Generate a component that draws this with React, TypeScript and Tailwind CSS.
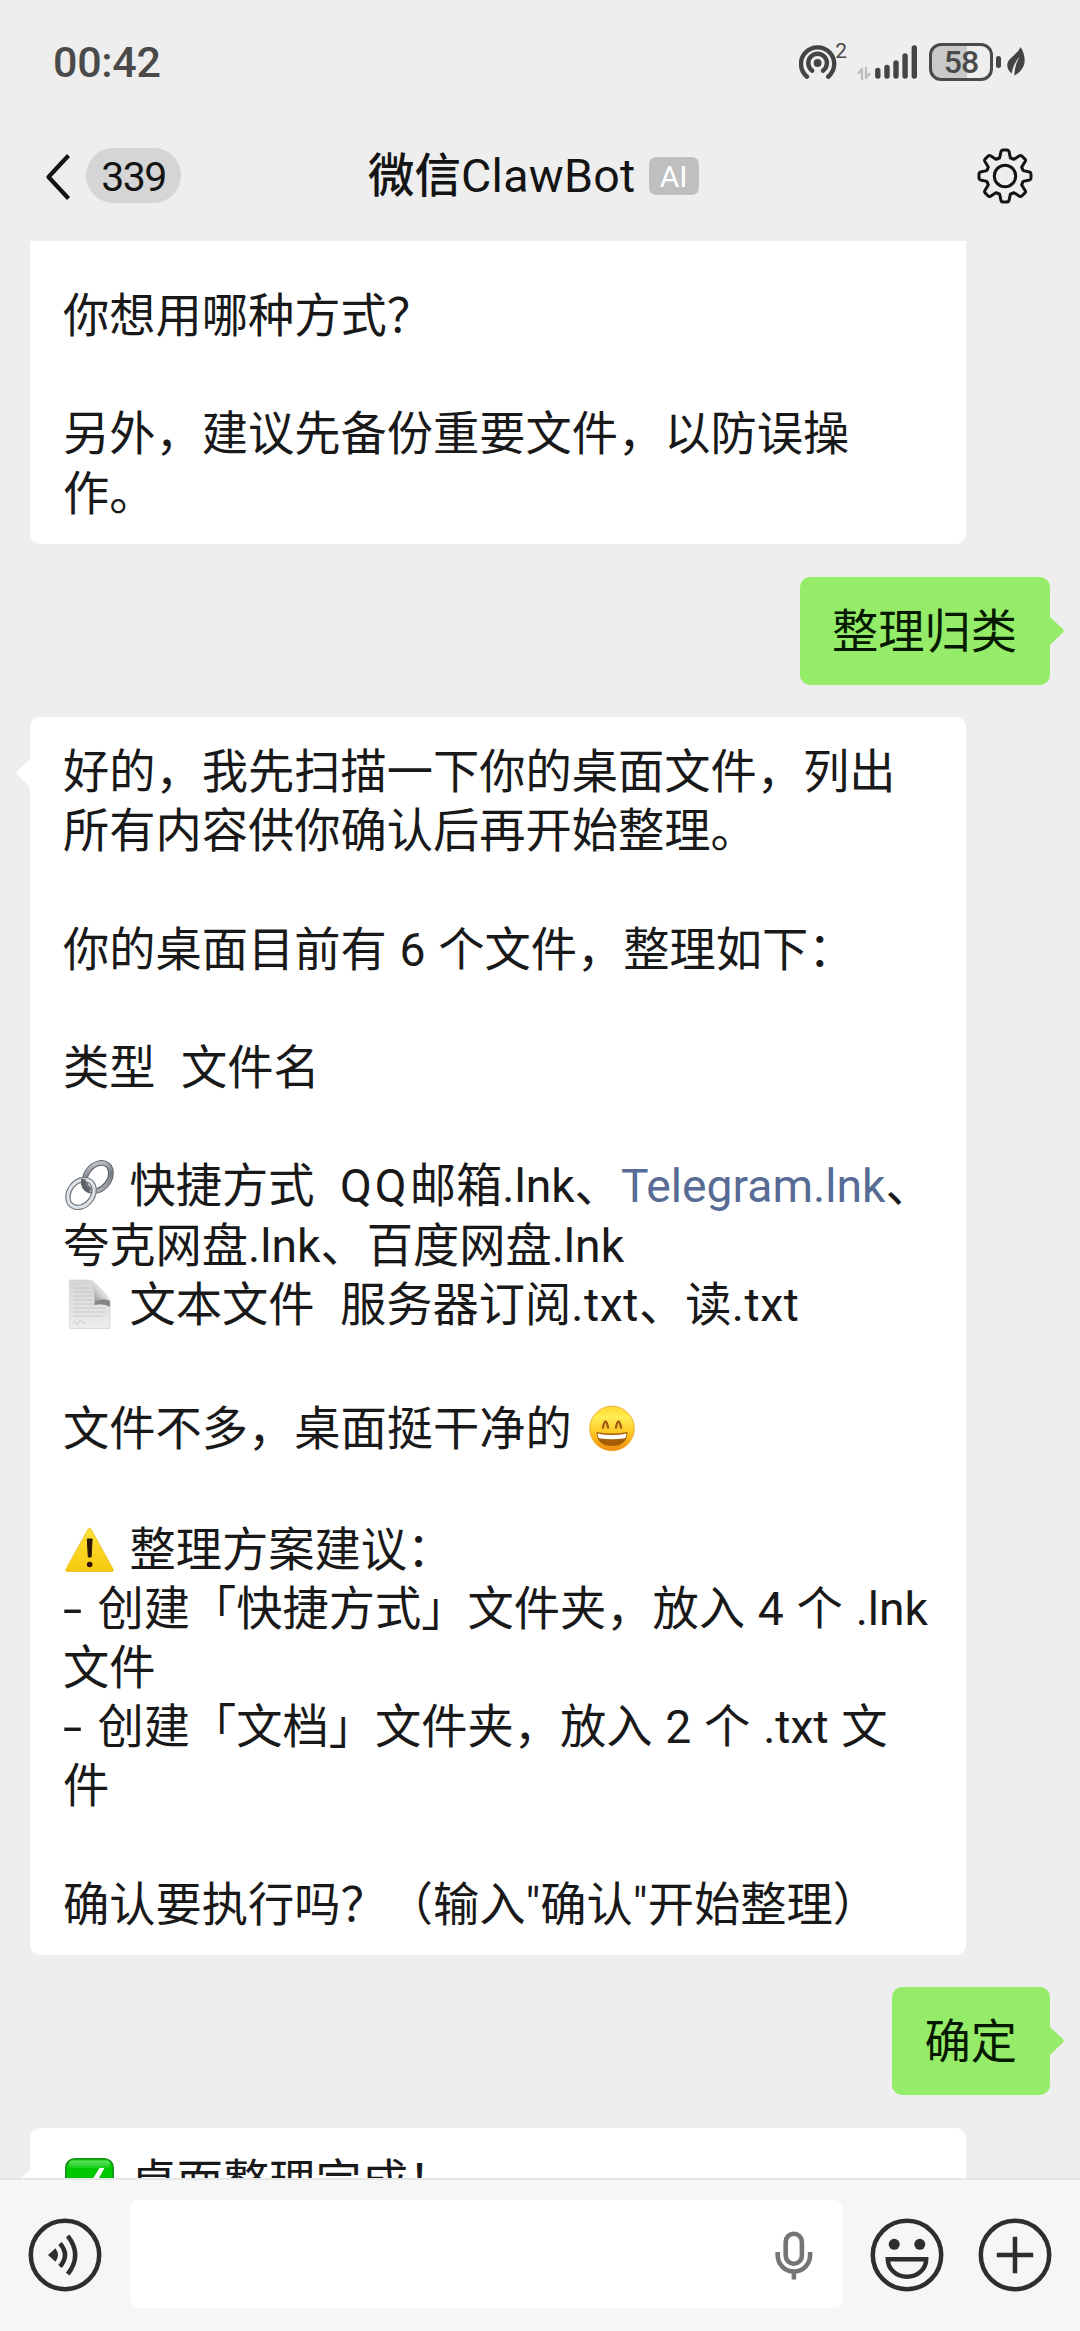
import React from 'react'

const TEETH = [0, 45, 90, 135, 180, 225, 270, 315];

const StatusBar = () => (
  <div className="flex h-[112px] shrink-0 items-start justify-between pl-[53px] pr-[55px] pt-[37px] text-[#4a4a4a]">
    <span className="h-[50px] text-[43px] font-medium leading-[50px] tracking-[-0.300px]">00:42</span>
    <div className="flex items-start">
      <svg className="mt-[6px] h-[38px] w-[38px]" viewBox="0 0 38 38" fill="none" stroke="#444" strokeWidth="4.4" strokeLinecap="round">
        <circle cx="18.6" cy="20" r="3.9" fill="#444" stroke="none" />
        <path d="M13.2 27.6a9.3 9.3 0 1 1 10.8 0" />
        <path d="M8 33.7a16.6 16.6 0 1 1 21.2 0" />
      </svg>
      <span className="-ml-[2px] mt-[2px] text-[21px] leading-[24px]">2</span>
      <svg className="ml-[9px] mt-[6px] h-[38px] w-[64px]" viewBox="0 0 64 38" stroke="#444" strokeWidth="5.4" strokeLinecap="round">
        <path d="M6 36V26L2.5 30M10 25v10l3.5-4" fill="none" stroke="#bdbdbd" strokeWidth="2.4" strokeLinejoin="round" />
        <path d="M21.8 27.5V33M31 24.5V33M40 20V33M49.1 13V33M58.3 5V33" />
      </svg>
      <div className="ml-[9px] mt-[6px] flex h-[38px] w-[64px] items-center justify-center rounded-[12px] border-[3px] border-[#4a4a4a] bg-linear-to-r from-[#c9c9c9] from-60% to-[#eee] to-60% text-[32px] font-medium leading-none tracking-[-1px]">58</div>
      <div className="ml-[3px] mt-[19px] h-[12px] w-[5px] rounded-full bg-[#444]" />
      <svg className="ml-[6px] mt-[10px] h-[29px] w-[18px]" viewBox="0 0 18 29">
        <path d="M13.5 0C17 5 18 11 17.6 15c-.6 6-5 11-10.300 13.500C7.500 22 9 16 12.500 10 8.500 14 5.500 20 4.800 26.500 1.500 24.500 0 21 .3 17.500 1 11 10 8 13.500 0Z" fill="#444" />
      </svg>
    </div>
  </div>
);

const Header = () => (
  <div className="flex h-[129px] shrink-0 items-start justify-between pl-[45px] pr-[47px] pt-[36px] text-[#141414]">
    <div className="flex w-[323px] items-center">
      <svg className="h-[54px] w-[26px]" viewBox="0 0 26 54" fill="none" stroke="#141414" strokeWidth="4.2" strokeLinejoin="round">
        <path d="M23.500 6.500 3.500 28 23.500 49.500" />
      </svg>
      <span className="ml-[15px] flex h-[55px] w-[95px] items-center justify-center rounded-full bg-[#d5d5d5] pt-[3px] text-[41px] leading-none tracking-[-1.500px]">339</span>
    </div>
    <div className="flex h-[55px] flex-1 items-center">
      <span className="pt-[2px] text-[46.500px] font-medium leading-[55px]">微信<span className="font-normal tracking-[.3px]">ClawBot</span></span>
      <span className="ml-[13px] flex h-[38px] w-[50px] items-center justify-center rounded-[7px] bg-[#bfbfbf] pt-[2px] text-[30px] leading-none text-white">AI</span>
    </div>
    <svg className="h-[56px] w-[56px]" viewBox="-28 -28 56 56" fill="none" stroke="#141414" strokeWidth="3" strokeLinecap="round" strokeLinejoin="round">
      <circle r="10.700" />
      {TEETH.map(a => (
        <path key={a} transform={`rotate(${a})`} d="M-7.200-17.300-5.400-18.200-4-24.500Q-3.600-26-2.200-26H2.200Q3.600-26 4-24.500L5.400-18.200 7.200-17.300" />
      ))}
    </svg>
  </div>
);

const LinkEmoji = () => (
  <svg className="-mt-[4px] ml-[1.500px] mr-[16px] h-[50px] w-[49px] shrink-0" viewBox="0 0 49 50" fill="none">
    <defs>
      <linearGradient id="steel" x1="0" y1="0" x2="1" y2="1">
        <stop offset="0" stopColor="#d4d8dc" />
        <stop offset=".5" stopColor="#767c83" />
        <stop offset="1" stopColor="#b5babf" />
      </linearGradient>
    </defs>
    <ellipse cx="32.800" cy="17" rx="11.500" ry="15.500" transform="rotate(38 32.800 17)" stroke="#5d6268" strokeWidth="5.600" />
    <ellipse cx="32.800" cy="17" rx="11.500" ry="15.500" transform="rotate(38 32.800 17)" stroke="url(#steel)" strokeWidth="3.600" />
    <ellipse cx="16" cy="33.500" rx="11.700" ry="15.200" transform="rotate(38 16 33.500)" stroke="#737a81" strokeWidth="5.400" />
    <ellipse cx="16" cy="33.500" rx="11.700" ry="15.200" transform="rotate(38 16 33.500)" stroke="#dfe4e8" strokeWidth="3" />
    <path d="M18.500 19c-1 6 1 10 6 12" stroke="#5d6268" strokeWidth="4.800" />
  </svg>
);

const PageEmoji = () => (
  <svg className="-mt-[3px] ml-[1.500px] mr-[16px] h-[50px] w-[49px] shrink-0" viewBox="0 0 49 50">
    <defs>
      <linearGradient id="fold" x1="0" y1="1" x2="1" y2="0">
        <stop offset="0" stopColor="#777" />
        <stop offset=".5" stopColor="#d8d8d8" />
        <stop offset="1" stopColor="#fafafa" />
      </linearGradient>
      <linearGradient id="paper" x1="0" y1="0" x2="0" y2="1">
        <stop offset="0" stopColor="#d6d6d6" />
        <stop offset="1" stopColor="#ececec" />
      </linearGradient>
    </defs>
    <path d="M4.500 1H24q6 1 9 7l12 13V49q0 .5-1 .5H5.500q-1 0-1-1Z" fill="url(#paper)" stroke="#d4d4d4" strokeWidth=".8" />
    <path d="M8 5h8M8 9h17M8 13h19M8 17h20M8 21h20M8 25h32M8 29h33M8 33h33M8 37h30" stroke="#c6c6c6" strokeWidth="1" />
    <path d="M24 1q6 10 5.500 22 9-3 15.500 1-1-7-8-13.500Q30 3 24 1Z" fill="url(#fold)" />
    <path d="M29.500 23q9-5 15.500-1v6q-6-4-15.500-2Z" fill="#858585" />
    <path d="M8 45q2-5 3-1t3-1 3 1h4" fill="none" stroke="#c8c8c8" strokeWidth=".8" />
  </svg>
);

const SmileEmoji = () => (
  <svg className="-mt-[2px] ml-[4px] h-[47px] w-[46px] shrink-0" viewBox="0 0 46 47">
    <defs>
      <linearGradient id="face" x1="0" y1="0" x2="0" y2="1">
        <stop offset="0" stopColor="#ffd92e" />
        <stop offset=".25" stopColor="#ffec55" />
        <stop offset=".65" stopColor="#fcc21b" />
        <stop offset="1" stopColor="#ee8a12" />
      </linearGradient>
    </defs>
    <circle cx="23" cy="23.500" r="22.300" fill="url(#face)" stroke="#e9a31f" strokeWidth=".8" />
    <path d="M14 22.500q2.500-12 5 0M27 22.500q2.500-12 5 0" fill="none" stroke="#a2590c" strokeWidth="2.400" strokeLinecap="round" />
    <path d="M7.500 27q15.500 3 31 0Q38 41 23 41T7.500 27Z" fill="#a85d09" />
    <path d="M8.500 28.500q14.500 3 29 0 0 2.500-1.500 4.700-13 2-26 0-1.500-2.200-1.500-4.700Z" fill="#fff" />
  </svg>
);

const WarningEmoji = () => (
  <svg className="-mt-[1px] ml-[1.500px] mr-[16px] h-[46px] w-[49px] shrink-0" viewBox="0 0 49 46">
    <defs>
      <linearGradient id="warn" x1="0" y1="0" x2="0" y2="1">
        <stop offset="0" stopColor="#ffe13a" />
        <stop offset="1" stopColor="#f6c90e" />
      </linearGradient>
    </defs>
    <path d="M22.800 2.500q1.700-2.500 3.400 0L48 42q1 2.500-1.500 2.500h-44Q0 44.500 1 42Z" fill="url(#warn)" stroke="#e9bd1c" strokeWidth=".8" />
    <path d="M22.300 12h4.800l-1 18h-2.800Z" fill="#2a1606" stroke="#2a1606" strokeLinejoin="round" />
    <circle cx="24.700" cy="37.500" r="2.800" fill="#2a0c06" />
  </svg>
);

const CheckEmoji = () => (
  <svg className="ml-[1.500px] mr-[17px] h-[49px] w-[49px] shrink-0" viewBox="0 0 49 49">
    <defs>
      <linearGradient id="gloss" x1="0" y1="0" x2="0" y2="1">
        <stop offset="0" stopColor="#5fe25f" />
        <stop offset="1" stopColor="#18cf18" />
      </linearGradient>
    </defs>
    <rect x=".8" y=".8" width="47.400" height="47.400" rx="9" fill="#00c800" stroke="#16901a" strokeWidth="1.600" />
    <rect x="4" y="2.500" width="41" height="7.500" rx="3.700" fill="url(#gloss)" />
    <path d="M34.500 10h5L23 40h-5L10 28l5-2.500 5.500 7Z" fill="#fff" />
  </svg>
);

type LineProps = { children?: React.ReactNode, className?: string };

const Line = ({ children, className = "" }: LineProps) => (
  <p className={`flex h-[59.200px] items-center ${className}`}>{children}</p>
);

// list dash, a bit longer than the font's own hyphen
const Dash = () => <span className="mr-[9px] inline-block origin-left scale-x-150">-</span>;

const Txt = () => <span className="tracking-[.6px]">.txt</span>;

const BotBubble = ({ children, className = "", tail = true }: LineProps & { tail?: boolean }) => (
  <div className={`relative ml-[30px] w-[936px] shrink-0 rounded-[10px] bg-white pl-[33px] text-[#191919] ${className}`}>
    {tail && (
      <svg className="absolute -left-[14px] top-[41px] h-[30px] w-[15px]" viewBox="0 0 15 30">
        <path d="M15 0v30L1.200 16.500q-1.700-1.800 0-3.600Z" fill="#fff" />
      </svg>
    )}
    {children}
  </div>
);

const UserBubble = ({ children, className = "" }: LineProps) => (
  <div className={`relative mr-[30px] flex h-[108px] shrink-0 items-center self-end rounded-[10px] bg-[#95ec69] pl-[32px] pr-[33px] pt-[4px] text-[#061a02] ${className}`}>
    {children}
    <svg className="absolute -right-[14px] top-[39px] h-[30px] w-[15px]" viewBox="0 0 15 30">
      <path d="M0 0v30l13.800-13.500q1.700-1.800 0-3.600Z" fill="#95ec69" />
    </svg>
  </div>
);

const Chat = () => (
  <div className="flex min-h-0 flex-1 flex-col overflow-hidden whitespace-pre text-[46.250px] leading-[59.200px] [word-spacing:1.3px]">
    <BotBubble tail={false} className="h-[303px] rounded-t-none pt-[46px]">
      <Line>你想用哪种方式？</Line>
      <Line />
      <Line>另外，建议先备份重要文件，以防误操</Line>
      <Line>作。</Line>
    </BotBubble>
    <UserBubble className="mt-[33px]">整理归类</UserBubble>
    <BotBubble className="mt-[32px] h-[1238px] pt-[26px]">
      <Line>好的，我先扫描一下你的桌面文件，列出</Line>
      <Line>所有内容供你确认后再开始整理。</Line>
      <Line />
      <Line>你的桌面目前有 6 个文件，整理如下：</Line>
      <Line />
      <Line>类型  文件名</Line>
      <Line />
      <Line>
        <LinkEmoji />
        <span>快捷方式  <span className="tracking-[3px]">QQ</span>邮箱.lnk、<a className="text-[#576b95]">Telegram.lnk</a>、</span>
      </Line>
      <Line>夸克网盘.lnk、百度网盘.lnk</Line>
      <Line>
        <PageEmoji />
        <span>文本文件  服务器订阅<Txt />、读<Txt /></span>
      </Line>
      <Line />
      <Line className="mt-[5.500px]">
        <span>文件不多，桌面挺干净的 </span>
        <SmileEmoji />
      </Line>
      <Line />
      <Line className="mt-[2.600px]">
        <WarningEmoji />
        <span>整理方案建议：</span>
      </Line>
      <Line><span><Dash /> 创建「快捷方式」文件夹，放入 4 个 .lnk</span></Line>
      <Line>文件</Line>
      <Line><span><Dash /> 创建「文档」文件夹，放入 2 个 .txt 文</span></Line>
      <Line>件</Line>
      <Line />
      <Line>确认要执行吗？（输入"确认"开始整理）</Line>
    </BotBubble>
    <UserBubble className="mt-[32px]">确定</UserBubble>
    <BotBubble className="mt-[33px] h-[180px] pt-[25px]">
      <Line>
        <CheckEmoji />
        <span>桌面整理完成！</span>
      </Line>
    </BotBubble>
  </div>
);

const InputBar = () => (
  <div className="flex h-[153px] shrink-0 items-start border-t-2 border-[#e6e6e6] bg-[#f6f6f6] pl-[28px] pt-[20px]">
    <svg className="mt-[18px] h-[74px] w-[74px]" viewBox="-37 -37 74 74" fill="none" stroke="#2e2e2e" strokeWidth="4.500">
      <circle r="34.200" />
      <path d="M-17 0-9.500-6.800Q-4.500 0-9.500 6.800Z" fill="#2e2e2e" stroke="none" />
      <path d="M-5-11.500q10 11.500 0 23M2.700-19.200q15 19.200 0 38.400" />
    </svg>
    <div className="ml-[28px] flex h-[108px] w-[713px] items-start justify-end rounded-[9px] bg-white pr-[30px] pt-[31px]">
      <svg className="h-[49px] w-[38px]" viewBox="0 0 38 49" fill="none" stroke="#757575" strokeWidth="4.600">
        <rect x="10.700" y="2.800" width="16.200" height="30" rx="8.100" />
        <path d="M2.700 21v3.300a16.200 16.200 0 0 0 32.400 0V21M18.900 40v8.500" />
      </svg>
    </div>
    <svg className="ml-[27px] mt-[18px] h-[74px] w-[74px]" viewBox="-37 -37 74 74" fill="none" stroke="#2e2e2e" strokeWidth="4.500">
      <circle r="34.200" />
      <circle cx="-12.800" cy="-10.700" r="5.500" fill="#2e2e2e" stroke="none" />
      <circle cx="12.800" cy="-10.700" r="5.500" fill="#2e2e2e" stroke="none" />
      <path d="M-19.200 4.200H19.200A19.200 17.500 0 0 1-19.200 4.200Z" />
    </svg>
    <svg className="ml-[34px] mt-[18px] h-[74px] w-[74px]" viewBox="-37 -37 74 74" fill="none" stroke="#2e2e2e" strokeWidth="4.500">
      <circle r="34.200" />
      <path d="M-18.200 0H18.200M0-18.200V18.200" />
    </svg>
  </div>
);

const App = () => {
  return (
    <div className="flex h-[2331px] w-[1080px] flex-col overflow-hidden bg-[#eeeeee] font-['Roboto','Noto_Sans_CJK_SC',sans-serif] [text-spacing-trim:space-all]">
      <StatusBar />
      <Header />
      <Chat />
      <InputBar />
    </div>
  )
}

export default App;
